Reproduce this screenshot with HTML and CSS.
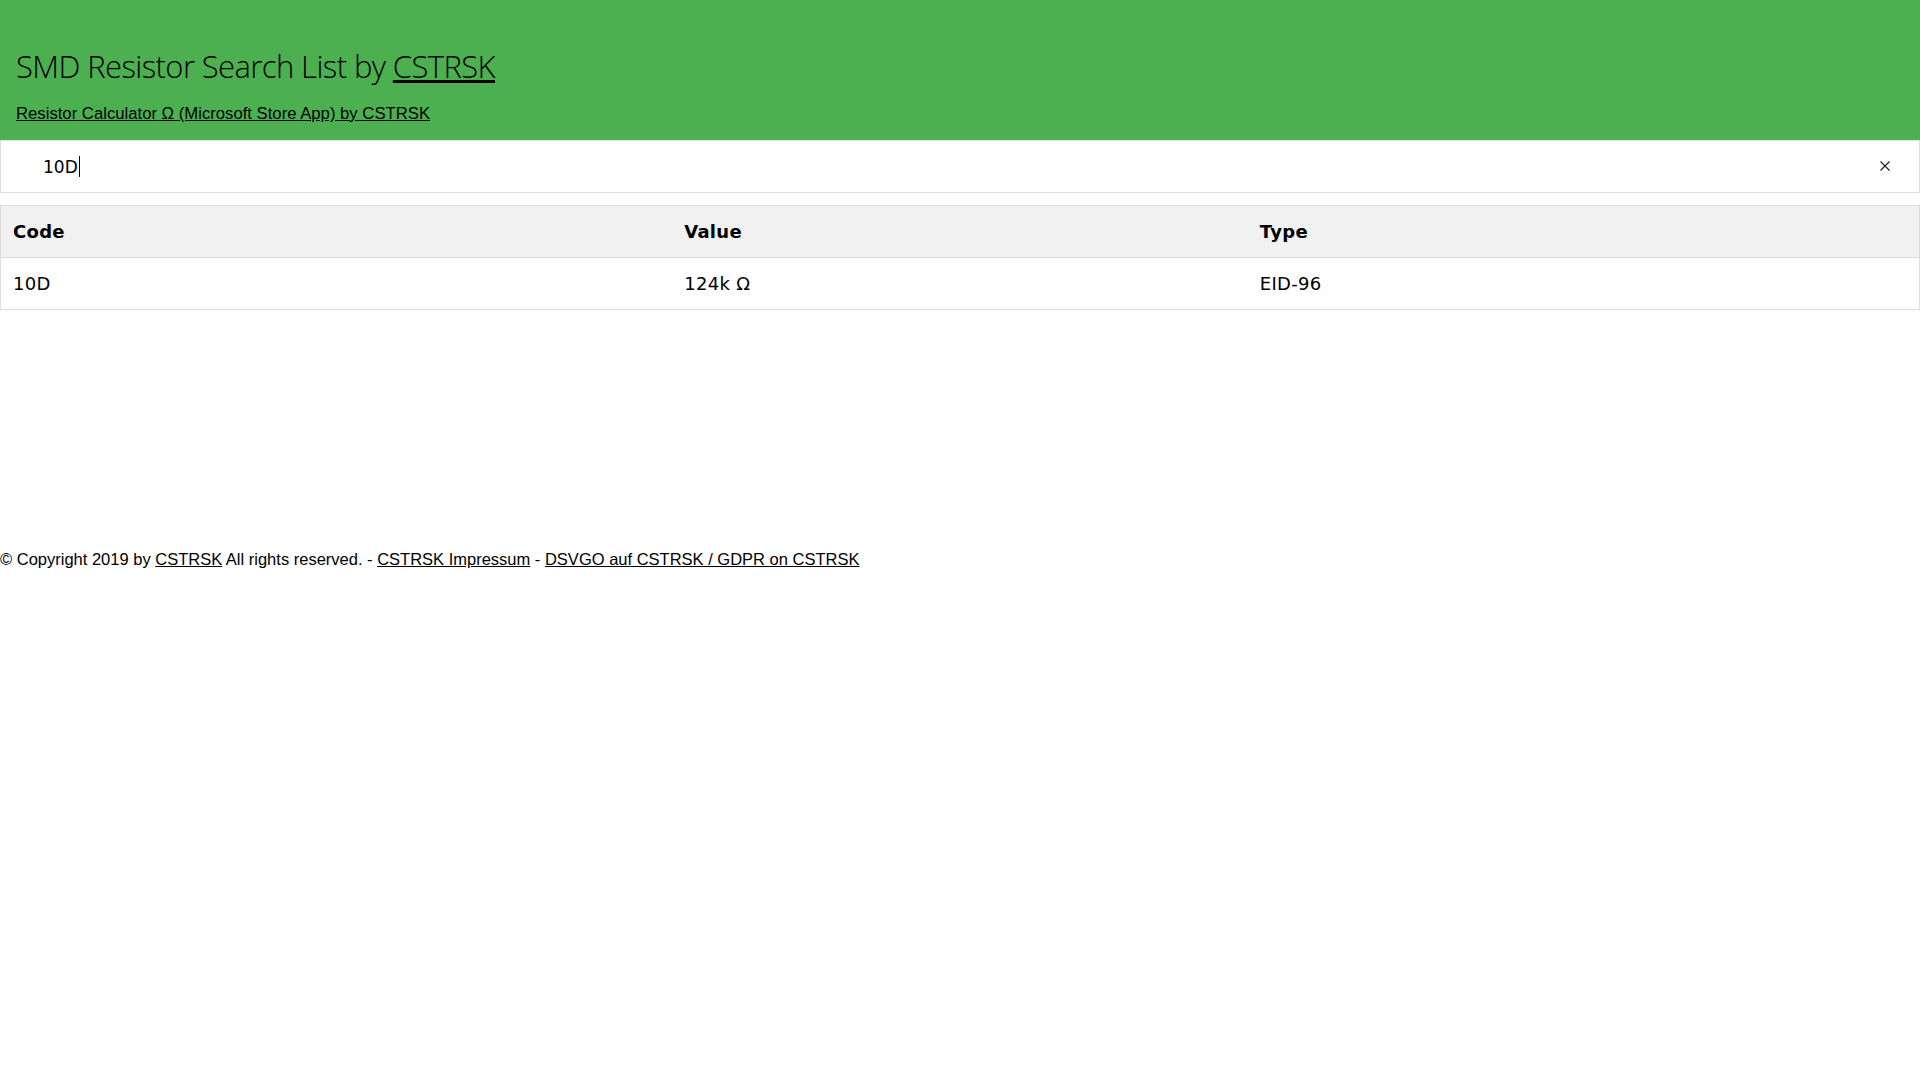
FILE: index.html
```html
<!DOCTYPE html>
<html lang="de">
<head>
<meta charset="utf-8">
<title>SMD Resistor Search List by CSTRSK</title>
<link rel="stylesheet" href="styles.css">
</head>
<body>
<header class="masthead">
  <h1 class="masthead-title">SMD Resistor Search List by <a href="#">CSTRSK</a></h1>
  <a class="masthead-link" href="#">Resistor Calculator Ω (Microsoft Store App) by CSTRSK</a>
</header>

<div class="search">
  <div class="search-field"><span class="search-value">10D</span><span class="caret"></span></div>
  <span class="search-clear" aria-label="clear">
    <svg width="10" height="10" viewBox="0 0 10 10"><path d="M0.5 0.5 L9.5 9.5 M9.5 0.5 L0.5 9.5" stroke="#1a1a1a" stroke-width="1.1" fill="none"/></svg>
  </span>
</div>

<table class="results">
  <colgroup><col class="col-code"><col class="col-value"><col class="col-type"></colgroup>
  <tr class="results-head">
    <th>Code</th>
    <th>Value</th>
    <th>Type</th>
  </tr>
  <tr>
    <td>10D</td>
    <td>124k Ω</td>
    <td>EID-96</td>
  </tr>
</table>

<footer class="site-footer">
  © Copyright 2019 by <a href="#">CSTRSK</a> All rights reserved. - <a href="#">CSTRSK Impressum</a> - <a href="#">DSVGO auf CSTRSK / GDPR on CSTRSK</a>
</footer>
</body>
</html>
```
FILE: styles.css
```css
html, body {
  margin: 0;
  padding: 0;
  background: #fff;
  color: #000;
  font-family: "Liberation Sans", Arial, sans-serif;
}

a { color: #000; }

.masthead {
  box-sizing: border-box;
  background: #4caf50;
  padding: 48px 16px 0;
  height: 140px;
}

.masthead-title {
  margin: 0;
  font-weight: 300;
  font-size: 31px;
  line-height: 36px;
  font-family: "Open Sans", sans-serif;
  letter-spacing: -0.6px;
}

.masthead-link {
  display: inline-block;
  margin-top: 20px;
  font-size: 16.7px;
  font-family: "Liberation Sans", Arial, sans-serif;
}

.search {
  position: relative;
}

.search-field {
  box-sizing: border-box;
  height: 53px;
  border: 1px solid #ddd;
  padding: 0 20px 0 42px;
  display: flex;
  align-items: center;
  font-family: "DejaVu Sans", sans-serif;
  font-size: 17px;
  margin-bottom: 12px;
}

.caret {
  display: inline-block;
  width: 1px;
  height: 21px;
  margin-left: 1px;
  background: #000;
}

.search-clear {
  position: absolute;
  right: 30px;
  top: 21px;
  width: 10px;
  height: 10px;
  display: block;
  line-height: 0;
}

.results {
  border-collapse: collapse;
  width: 100%;
  border: 1px solid #ddd;
  font-family: "DejaVu Sans", sans-serif;
  font-size: 18px;
  letter-spacing: 0.3px;
}

.col-code { width: 35%; }
.col-value { width: 30%; }
.col-type { width: 35%; }

.results tr {
  border-bottom: 1px solid #ddd;
}

.results th,
.results td {
  text-align: left;
  padding: 0 12px;
  height: 51px;
}

.results-head {
  background: #f1f1f1;
}

.site-footer {
  margin-top: 240px;
  font-size: 16.5px;
  font-family: "Liberation Sans", Arial, sans-serif;
}
```
